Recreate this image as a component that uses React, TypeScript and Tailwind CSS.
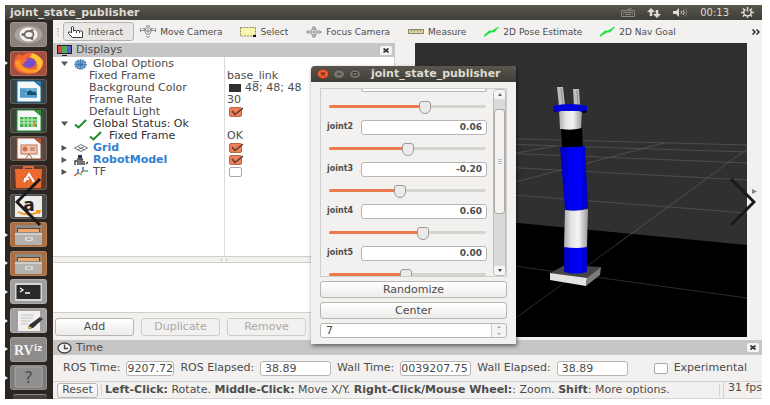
import React, { useState } from "react";

function TopBar() {
  return (
    <header className="flex h-[15px] items-center justify-between bg-gradient-to-b from-[#59564d] to-[#3f3e39] pl-[5px] pr-2 text-[#dfdbd2]">
      <h1 className="text-[11px] leading-3 font-bold">joint_state_publisher</h1>
      <div className="flex items-center gap-3">
        <svg width="14" height="9" viewBox="0 0 14 9" fill="none" stroke="#8b887f" aria-label="Keyboard">
          <path d="M0.500 2.500h13v6h-13zM7 2.500V1h3V0M2 4.500h10M2 6.500h1M4 6.500h6M11 6.500h1" />
        </svg>
        <svg width="14" height="10" viewBox="0 0 14 10" fill="#dfdbd2" aria-label="Network">
          <path d="M4 0L0 4h2.700v4h2.600V4H8zM10 10l4-4h-2.700V2H8.700v4H6z" />
        </svg>
        <svg width="15" height="9" viewBox="0 0 15 9" aria-label="Sound">
          <path fill="#dfdbd2" d="M0 3h3l3-3v9L3 6H0z" />
          <path fill="none" stroke="#dfdbd2" d="M8 3q1.500 1.500 0 3M10 2q2.500 2.500 0 5" />
          <path fill="none" stroke="#8b887f" d="M12 0.500q3.500 4 0 8" />
        </svg>
        <time className="text-[10px] leading-3">00:13</time>
        <svg width="13" height="11" viewBox="0 0 13 11" fill="none" stroke="#dfdbd2" aria-label="Session">
          <path strokeWidth="1.500" d="M4.500 2.700a3.800 3.300 0 1 0 4 0M6.500 0v4.500M0 5.500h2.500M10.500 5.500H13M2 1.500l1.500 1.500M11 1.500L9.500 3M2 9.500L3.500 8M11 9.500L9.500 8M6.500 9v2" />
        </svg>
      </div>
    </header>
  );
}

function Drawer() {
  return (
    <g>
      <rect x="5" y="3" width="27" height="19" rx="1" fill="#8d8a86" />
      <rect x="7" y="6" width="23" height="4" fill="#5c4636" />
      <rect x="8" y="7" width="21" height="3" fill="#f0a868" />
      <rect x="5" y="11" width="27" height="12" rx="1" fill="#b4b2af" />
      <rect x="5" y="11" width="27" height="2" fill="#cfcdca" />
      <rect x="15" y="15" width="8" height="4" rx="1" fill="#dddbd8" />
      <path d="M17 17h4" stroke="#888" />
    </g>
  );
}

function DocIcon({ color, dark }: { color: string; dark: string }) {
  return (
    <g>
      <path d="M7 2h17l7 6v15H7z" fill="#f4f6f7" stroke={dark} />
      <path d="M24 2h7v6z" fill={color} />
    </g>
  );
}

const launcher: { name: string; tile: string; running?: boolean; art: React.ReactNode }[] = [
  {
    name: "Search your computer",
    tile: "bg-[#8b837c]",
    art: (
      <g>
        <ellipse cx="18.500" cy="12.500" rx="14" ry="9" fill="#aaa39d" />
        <ellipse cx="18.500" cy="12.500" rx="9" ry="7" fill="#f4f2f0" />
        <ellipse cx="19" cy="12.500" rx="4.500" ry="3.500" fill="none" stroke="#716a64" strokeWidth="1.800" />
        <circle cx="13" cy="12.500" r="1.600" fill="#716a64" />
        <circle cx="22" cy="8.500" r="1.500" fill="#716a64" />
        <circle cx="22" cy="16.500" r="1.500" fill="#716a64" />
      </g>
    ),
  },
  {
    name: "Firefox",
    tile: "bg-[#a4503f]",
    running: true,
    art: (
      <g>
        <path d="M5 7q2-1 3-4 3 2 6 1 3-3 8-2 8 2 11 9 0 10-12 12-14 1-17-8z" fill="#f5642f" />
        <path d="M22 2q9 3 11 9-1 9-10 11 6-5 4-10-1-4-7-6z" fill="#ffc63d" />
        <path d="M5 10q1 11 14 12 7 0 10-5-9 4-16-1-4-3-2-8z" fill="#ff9a29" />
        <ellipse cx="19" cy="12" rx="6.500" ry="5" fill="#7650c8" />
        <path d="M9 8q5-2 9 1-4 1-4 4-5-1-5-5z" fill="#f5702f" />
      </g>
    ),
  },
  {
    name: "LibreOffice Writer",
    tile: "bg-[#3d4448]",
    art: (
      <g>
        <DocIcon color="#2280b4" dark="#176991" />
        <rect x="10" y="9" width="17" height="10" fill="#6db3d8" />
        <path d="M10 11h6M10 13h7M10 15h5M10 17h17" stroke="#3288b8" />
        <path d="M17 16v-3l3-2 3 2 2-1 2 4z" fill="#17506d" />
      </g>
    ),
  },
  {
    name: "LibreOffice Calc",
    tile: "bg-[#3d463b]",
    art: (
      <g>
        <DocIcon color="#2a9c36" dark="#258c32" />
        <rect x="10" y="9" width="17" height="10" fill="#43b649" />
        <path d="M10 12h17M10 15h17M14 9v10M18 9v10M22 9v10" stroke="#d6f2d6" />
        <path d="M23 19v-5h2v5z" fill="#f09030" />
      </g>
    ),
  },
  {
    name: "LibreOffice Impress",
    tile: "bg-[#574842]",
    art: (
      <g>
        <DocIcon color="#b75434" dark="#94492f" />
        <rect x="11" y="9" width="16" height="9" fill="#f1c8b6" stroke="#c4714f" />
        <circle cx="15" cy="13" r="2.500" fill="#cc6f4b" />
        <path d="M20 12h5M20 14h5M19 18l-3 4M19 18l3 4" stroke="#a3624a" />
      </g>
    ),
  },
  {
    name: "Ubuntu Software",
    tile: "bg-[#5c3a2c]",
    art: (
      <g>
        <path d="M14 5V2h9v3" fill="none" stroke="#e0653a" strokeWidth="2" />
        <path d="M5 4h27l-1 19H6z" fill="#e9692f" />
        <path d="M14 17l5-8 5 8M14 14h5" fill="none" stroke="#fff" strokeWidth="2" />
      </g>
    ),
  },
  {
    name: "Amazon",
    tile: "bg-[#4b4a49]",
    art: (
      <g>
        <rect x="5" y="2" width="27" height="21" fill="#eeeceb" />
        <text x="19" y="17" textAnchor="middle" fontSize="17" fontWeight="bold" fill="#222">a</text>
        <path d="M8 18q10 5 21 0M26 17h4l-1 3" fill="none" stroke="#f5981e" strokeWidth="1.800" />
      </g>
    ),
  },
  { name: "Files", tile: "bg-[#a96f43]", running: true, art: <Drawer /> },
  { name: "Files", tile: "bg-[#a96f43]", running: true, art: <Drawer /> },
  {
    name: "Terminal",
    tile: "bg-[#a09e9c]",
    running: true,
    art: (
      <g>
        <rect x="5" y="4" width="27" height="18" rx="1" fill="#d8d6d4" />
        <rect x="6.500" y="6" width="24" height="14" fill="#2b2b2b" />
        <path d="M10 9l3 2-3 2M15 14h5" fill="none" stroke="#fff" strokeWidth="1.300" />
      </g>
    ),
  },
  {
    name: "Text Editor",
    tile: "bg-[#a3a1a0]",
    running: true,
    art: (
      <g>
        <rect x="8" y="3" width="22" height="20" fill="#f1f0ef" />
        <path d="M11 7h13M11 10h12M11 13h9M11 16h7" stroke="#c4c2c0" />
        <path d="M30 9l3 2-10 9-5 1 1-4z" fill="#333" />
        <path d="M30 9l2-1 2 2-1 1z" fill="#c883a5" />
        <path d="M18 21l1-3 3 2z" fill="#e8b84a" />
      </g>
    ),
  },
  {
    name: "RViz",
    tile: "bg-[#8e8c8b]",
    running: true,
    art: (
      <g fill="#f3f3f3" fontWeight="bold">
        <text x="4" y="18" fontSize="14" className="font-['Liberation_Serif',serif]">RV</text>
        <text x="24" y="14" fontSize="9">iz</text>
      </g>
    ),
  },
  {
    name: "Unknown application",
    tile: "bg-[#7d7c7b]",
    running: true,
    art: (
      <g>
        <rect x="5" y="2" width="27" height="20" rx="1" fill="#8f8e8d" stroke="#a9a8a7" />
        <text x="18.500" y="18" textAnchor="middle" fontSize="16" fill="#4b4b4b">?</text>
      </g>
    ),
  },
];

function Launcher() {
  return (
    <nav aria-label="Launcher" className="flex w-12 shrink-0 flex-col justify-between bg-[#2b2622] pt-0.5">
      {launcher.map((item, i) => (
        <div key={i} className="flex items-center">
          <svg className="w-[5px]" width="5" height="4" viewBox="0 0 5 4">
            {item.running && <path d="M0 0l3 2-3 2z" fill="#f0f0f0" />}
          </svg>
          <button aria-label={item.name} className={"h-[25px] w-[37px] rounded-[3px] border border-white/15 " + item.tile}>
            <svg className="-m-px block" width="37" height="25" viewBox="0 0 37 25">{item.art}</svg>
          </button>
        </div>
      ))}
      <div className="ml-2 h-[5px] w-[34px] rounded-t-[3px] border-t border-[#8a8988] bg-[#454341]" />
    </nav>
  );
}

const greenArrow = (
  <svg width="15" height="10" viewBox="0 0 15 10">
    <path d="M0 8.500L5 4h3l6.500-4L10 5H7L0 9.500z" fill="#17e33f" stroke="#17e33f" strokeWidth=".8" />
  </svg>
);

const tools = [
  {
    label: "Move Camera",
    icon: (
      <svg width="16" height="13" viewBox="0 0 16 13" fill="none" stroke="#8a8987">
        <ellipse cx="8" cy="6" rx="3" ry="3.500" />
        <path d="M0.500 3v4M15.500 3v4M1 5.500h4M11 5.500h4M2.500 3.500h2v2M13.500 3.500h-2v2M6 1.500l2-1 2 1M6 11l2 1.500L10 11M6 6h4M8 4v4" />
      </svg>
    ),
  },
  {
    label: "Select",
    icon: (
      <svg width="16" height="10" viewBox="0 0 16 10">
        <rect x="0.500" y="0.500" width="15" height="8.500" fill="#fbf5ac" stroke="#8c8860" strokeDasharray="2 1" />
        <path d="M13 8h3v2h-3z" fill="#111" />
      </svg>
    ),
  },
  {
    label: "Focus Camera",
    icon: (
      <svg width="16" height="12" viewBox="0 0 16 12" fill="none" stroke="#949290">
        <ellipse cx="8" cy="6" rx="3.500" ry="3" />
        <path d="M6 2l2-1.500L10 2zM6 10l2 1.500 2-1.500zM3 4.500L0.500 6 3 7.500zM13 4.500L15.500 6 13 7.500zM5 6h6M8 3.500v5" />
      </svg>
    ),
  },
  {
    label: "Measure",
    icon: (
      <svg width="16" height="5" viewBox="0 0 16 5">
        <rect x="0.500" y="0.500" width="15" height="4" fill="#dcd4a4" stroke="#8d8868" />
        <path d="M3.500 1v1.500M6.500 1v1.500M9.500 1v1.500M12.500 1v1.500" stroke="#8d8868" />
      </svg>
    ),
  },
  { label: "2D Pose Estimate", icon: greenArrow },
  { label: "2D Nav Goal", icon: greenArrow },
];

function Toolbar() {
  return (
    <div role="toolbar" className="flex h-[23px] items-center pl-1 pr-0.5 text-[9px] leading-3 whitespace-nowrap text-[#4c4c4c]">
      <span className="mr-1 h-2 w-0.5 border-x border-dotted border-[#c8c6c4]" />
      <button className="mr-1.5 flex h-[19px] items-center gap-1 rounded-[3px] border border-[#b5b2af] bg-[#e8e7e5] pr-2.5 pl-1">
        <svg width="16" height="12" viewBox="0 0 16 12" fill="#fff" stroke="#3c3c3c">
          <path d="M4.500 11.500L0.500 7.500V6h2l1 1V1q1-1 2 0v4q1.500-1.500 3 0 1.500-1.500 3 0 1.500-.5 3 .5v6zM8.500 5v2M11.500 5v2" />
        </svg>
        Interact
      </button>
      <div className="flex flex-1 items-center gap-[18px]">
        {tools.map((t) => (
          <button key={t.label} className="flex items-center gap-1">
            {t.icon}
            {t.label}
          </button>
        ))}
      </div>
      <button aria-label="More tools">
        <svg width="8" height="6" viewBox="0 0 8 6" fill="none" stroke="#222" strokeWidth="1.400">
          <path d="M0.500 0.500L3 3 0.500 5.500M4.500 0.500L7 3 4.500 5.500" />
        </svg>
      </button>
    </div>
  );
}

function CloseButton({ label }: { label: string }) {
  return (
    <button aria-label={label} className="flex h-[9px] w-3 items-center justify-center rounded-[2px] bg-[#f6f5f4]">
      <svg width="6" height="5" viewBox="0 0 6 5" stroke="#333" strokeWidth="1.700">
        <path d="M0.500 0.500l5 4M5.500 0.500l-5 4" />
      </svg>
    </button>
  );
}

function Check({ label, initial }: { label: string; initial: boolean }) {
  const [on, setOn] = useState(initial);
  return (
    <span className="relative flex h-3 w-[15px] items-center">
      <input
        type="checkbox"
        aria-label={label}
        checked={on}
        onChange={() => setOn(!on)}
        className="ml-0.5 h-2.5 w-[13px] appearance-none rounded-[2px] border border-[#aaa7a4] bg-white checked:border-[#b9674a] checked:bg-[#ee7f58]"
      />
      {on && (
        <svg className="pointer-events-none absolute top-0 left-0.5" width="15" height="11" viewBox="0 0 15 11">
          <path d="M3 5l3 3.500L14 2" fill="none" stroke="#5b3a2c" strokeWidth="1.500" />
        </svg>
      )}
    </span>
  );
}

const tick = (
  <svg width="13" height="10" viewBox="0 0 13 10">
    <path d="M1 5.500l3.500 3L12 1" fill="none" stroke="#218a2b" strokeWidth="2" />
  </svg>
);

const gear = (
  <svg width="13" height="11" viewBox="0 0 13 11">
    <ellipse cx="6.500" cy="5.500" rx="5.500" ry="4.500" fill="#6fa3d8" stroke="#4a7fb8" strokeWidth="1.600" strokeDasharray="1.500 1" />
    <path d="M6.500 1.500v8M2 5.500h9M3.500 3l6 5M9.500 3l-6 5" stroke="#3c6ea6" strokeWidth=".8" />
  </svg>
);

const gridIcon = (
  <svg width="14" height="8" viewBox="0 0 14 8" fill="none" stroke="#777">
    <path d="M0.500 4L7 0.500 13.500 4 7 7.500zM3.500 2.500l7 3.500M10.500 2.500l-7 3.500" />
  </svg>
);

const robotIcon = (
  <svg width="14" height="11" viewBox="0 0 14 11">
    <path d="M4 0h4v3H4z" fill="#2c3550" />
    <path d="M1 10V6h3v4M6 10V4h2v6M10 10V6M12 9l2-2M3 4h6" fill="none" stroke="#3a3a3a" strokeWidth="1.400" />
  </svg>
);

const tfIcon = (
  <svg width="14" height="10" viewBox="0 0 14 10" fill="none" strokeWidth="1.300">
    <path d="M0 9l4-3M7 6l2-2" stroke="#e23b3b" />
    <path d="M4 6V2M9 4V0" stroke="#3548dd" />
    <path d="M4 6l4 2M9 4h5" stroke="#3bc84b" />
  </svg>
);

const rows: {
  name: string;
  depth: number;
  open?: boolean;
  icon?: React.ReactNode;
  tone?: string;
  value?: React.ReactNode;
}[] = [
  { name: "Global Options", depth: 0, open: true, icon: gear },
  { name: "Fixed Frame", depth: 1, value: "base_link" },
  {
    name: "Background Color",
    depth: 1,
    value: (
      <>
        <span className="mr-1 ml-0.5 h-2 w-3 bg-[#303030]" />
        48; 48; 48
      </>
    ),
  },
  { name: "Frame Rate", depth: 1, value: "30" },
  { name: "Default Light", depth: 1, value: <Check label="Default Light" initial /> },
  { name: "Global Status: Ok", depth: 0, open: true, icon: tick, tone: "text-[#2f2f2f]" },
  { name: "Fixed Frame", depth: 1, icon: tick, tone: "text-[#2f2f2f]", value: "OK" },
  { name: "Grid", depth: 0, open: false, icon: gridIcon, tone: "font-bold text-[#2f80cf]", value: <Check label="Grid" initial /> },
  { name: "RobotModel", depth: 0, open: false, icon: robotIcon, tone: "font-bold text-[#2f80cf]", value: <Check label="RobotModel" initial /> },
  { name: "TF", depth: 0, open: false, icon: tfIcon, value: <Check label="TF" initial={false} /> },
];

function DisplaysPanel() {
  return (
    <section className="flex w-[342px] shrink-0 flex-col">
      <div className="flex h-3.5 items-center justify-between bg-[#c6c6c6] pr-[3px] pl-1">
        <h2 className="flex items-center gap-1 text-[11px] leading-3 text-[#4c4c4c]">
          <svg width="15" height="11" viewBox="0 0 15 11">
            <rect width="15" height="9" fill="#222" />
            <path d="M1 1h4v7H1z" fill="#d84a4a" />
            <path d="M5 1h5v7H5z" fill="#4cae5b" />
            <path d="M10 1h4v7h-4z" fill="#5560c8" />
            <path d="M5 10h5v1H5z" fill="#222" />
          </svg>
          Displays
        </h2>
        <CloseButton label="Close Displays" />
      </div>
      <div className="flex h-[200px] border-r border-b border-[#d0cecb] bg-white text-[11px] leading-3 text-[#4c4c4c]">
        <div className="w-[172px] border-r border-[#dddbd9] pt-px pl-2">
          {rows.map((r, i) => (
            <div key={i} className={"flex h-3 items-center whitespace-nowrap " + (r.tone ?? "")}>
              {r.depth === 0 ? (
                <svg className="mr-1.5" width="7" height="6" viewBox="0 0 7 6" fill="#555">
                  <path d={r.open ? "M0 0.500h7L3.500 5z" : "M0.500 0L6 3 0.500 6z"} />
                </svg>
              ) : (
                <span className="w-7" />
              )}
              {r.icon && <span className={"flex shrink-0 items-center " + (r.depth ? "w-5" : "w-[19px]")}>{r.icon}</span>}
              <span>{r.name}</span>
            </div>
          ))}
        </div>
        <div className="flex-1 pt-px pl-0.5">
          {rows.map((r, i) => (
            <div key={i} className="flex h-3 items-center whitespace-nowrap">{r.value}</div>
          ))}
        </div>
      </div>
      <div className="flex h-[5px] items-center justify-center">
        <span className="h-[3px] w-1.5 border-x border-[#c4c2c0]" />
      </div>
      <div className="h-[51px] border border-l-0 border-[#d0cecb] bg-white" />
      <div className="flex flex-1 items-center gap-[7px] overflow-hidden px-0.5 text-[11px] leading-3">
        <button className="h-[18px] w-[79px] shrink-0 rounded-[3px] border border-[#b8b5b2] bg-gradient-to-b from-white to-[#ececeb] text-[#4c4c4c]">Add</button>
        <button disabled className="h-[18px] w-[79px] shrink-0 rounded-[3px] border border-[#cfcdcb] text-[#aaa8a6]">Duplicate</button>
        <button disabled className="h-[18px] w-[79px] shrink-0 rounded-[3px] border border-[#cfcdcb] text-[#aaa8a6]">Remove</button>
      </div>
    </section>
  );
}

function RobotView() {
  return (
    <svg className="block h-full w-full" viewBox="415 43 332 294" preserveAspectRatio="none" aria-label="3D view">
      <defs>
        <linearGradient id="blue">
          <stop offset="0" stopColor="#0000b4" />
          <stop offset=".35" stopColor="#0000f0" />
          <stop offset=".7" stopColor="#0000ff" />
          <stop offset="1" stopColor="#0000b0" />
        </linearGradient>
        <linearGradient id="white">
          <stop offset="0" stopColor="#aaa" />
          <stop offset=".3" stopColor="#e4e4e4" />
          <stop offset=".6" stopColor="#f4f4f4" />
          <stop offset="1" stopColor="#999" />
        </linearGradient>
      </defs>
      <rect x="415" y="43" width="332" height="294" fill="#303030" />
      <path d="M415 213L747 245V337H415z" fill="#000" />
      <g fill="none" stroke="#565656" strokeWidth=".8">
        <path d="M500 138.500L747 145M500 144L747 152M500 153L747 163M500 167L747 180M500 194L747 213M500 156L555 146M500 186L664 143" />
        <path d="M616 245L747 149" />
      </g>
      <path d="M500 264L747 298M516 318L628 236" fill="none" stroke="#2c2c2c" />
      <path d="M557 87h6l2 19h-6zM573 89h6l1 17h-6z" fill="#bdbdbd" />
      <path d="M561 88l2 17M577 90l1 15" stroke="#8f8f8f" />
      <path d="M559 110h23l-1 19q-10 2-21 0z" fill="url(#white)" />
      <path d="M553 106q17-4 34 0v6q-5 1-8-1h-18q-4 2-7 0z" fill="#0000d8" />
      <path d="M583 110l4 1-1 2h-4zM553 110l3 1-1 2z" fill="#05051c" />
      <path d="M561 129q10 2 21-1l1 19h-21z" fill="#000" />
      <path d="M560 147q12 1 25-1l3 62q-11 4-23 2z" fill="url(#blue)" />
      <path d="M550 273l15-8 36 2-14 12z" fill="#454545" />
      <path d="M564 247h23v25q-11 3-23 0z" fill="url(#blue)" />
      <path d="M565 210q11 2 23-1l-1 38q-11 2-23 0z" fill="url(#white)" />
      <path d="M550 273l37 5-1 8-36-6z" fill="#e2e2e2" />
      <path d="M587 278l14-11-1 8-14 11z" fill="#7c7c7c" />
    </svg>
  );
}

function Field({ label, value, width }: { label: string; value: string; width: string }) {
  return (
    <label className="flex items-center gap-1.5">
      {label}
      <input
        readOnly
        defaultValue={value}
        className={"h-[15px] rounded-[3px] border border-[#b8b5b2] bg-white text-[11px] leading-3 " + width}
      />
    </label>
  );
}

function TimePanel() {
  return (
    <section>
      <div className="flex h-[15px] items-center justify-between bg-[#c6c6c6] pr-[3px] pl-1">
        <h2 className="flex items-center gap-1 text-[11px] leading-3 text-[#4c4c4c]">
          <svg width="15" height="12" viewBox="0 0 15 12" fill="#f4f4f4" stroke="#444" strokeWidth="1.400">
            <ellipse cx="7.500" cy="6" rx="6.500" ry="5" />
            <path d="M7.500 2.500V6.500H11" fill="none" />
          </svg>
          Time
        </h2>
        <CloseButton label="Close Time" />
      </div>
      <div className="flex h-[26px] items-center gap-1.5 pl-2.5 pr-[15px] text-[11px] leading-3 whitespace-nowrap text-[#4c4c4c]">
        <Field label="ROS Time:" value="9207.72" width="w-12" />
        <Field label="ROS Elapsed:" value="38.89" width="w-[71px] pl-1" />
        <Field label="Wall Time:" value="0039207.75" width="w-[71px]" />
        <Field label="Wall Elapsed:" value="38.89" width="w-[71px] pl-1" />
        <label className="ml-auto flex items-center gap-1.5">
          <input type="checkbox" className="h-[11px] w-3.5 appearance-none rounded-[2px] border border-[#aaa7a4] bg-white" />
          Experimental
        </label>
      </div>
    </section>
  );
}

function StatusBar() {
  return (
    <footer className="flex h-[18px] items-center border-t border-b border-[#d5d3d1] pl-1 text-[11px] leading-3 whitespace-nowrap text-[#4c4c4c]">
      <button className="mr-[3px] h-[15px] w-[41px] shrink-0 rounded-[3px] border border-[#b8b5b2] bg-gradient-to-b from-white to-[#ececeb]">Reset</button>
      <p className="flex-1 border-x border-[#d5d3d1] pl-[3px]">
        <b>Left-Click:</b> Rotate. <b>Middle-Click:</b> Move X/Y. <b>Right-Click/Mouse Wheel:</b>: Zoom. <b>Shift</b>: More options.
      </p>
      <span className="ml-[3px] border-l border-[#d5d3d1] pb-1 pl-1">31 fps</span>
    </footer>
  );
}

const thumb =
  "[&::-webkit-slider-thumb]:-mt-1 [&::-webkit-slider-thumb]:h-[13px] [&::-webkit-slider-thumb]:w-3 [&::-webkit-slider-thumb]:appearance-none [&::-webkit-slider-thumb]:rounded-t-[3px] [&::-webkit-slider-thumb]:rounded-b-[6px] [&::-webkit-slider-thumb]:border [&::-webkit-slider-thumb]:border-[#9d9a97] [&::-webkit-slider-thumb]:bg-[#ecebea]";
const track =
  "[&::-webkit-slider-runnable-track]:h-[3px] [&::-webkit-slider-runnable-track]:rounded-full [&::-webkit-slider-runnable-track]:bg-[linear-gradient(90deg,#ec7a50_var(--fill),#d6d4d1_var(--fill))]";

function JointSlider({ name, start }: { name: string; start: number }) {
  const [v, setV] = useState(start);
  return (
    <input
      type="range"
      aria-label={name + " position"}
      value={v}
      onChange={(e) => setV(Number(e.target.value))}
      style={{ "--fill": v + "%" } as React.CSSProperties}
      className={"ml-0.5 block h-7 w-[157px] appearance-none bg-transparent " + track + " " + thumb}
    />
  );
}

const joints = [
  { name: "joint2", value: "0.06", pos: 50 },
  { name: "joint3", value: "-0.20", pos: 45 },
  { name: "joint4", value: "0.60", pos: 61 },
  { name: "joint5", value: "0.00", pos: 49 },
];

function JointDialog() {
  return (
    <div
      role="dialog"
      aria-label="joint_state_publisher"
      className="absolute top-[61px] left-[306px] w-[205px] rounded-t-[4px] bg-[#f2f1f0] shadow-[1px_2px_4px_rgba(0,0,0,0.5)]"
    >
      <div className="flex h-4 items-center gap-1 rounded-t-[4px] bg-gradient-to-b from-[#59564d] to-[#3f3e39] pl-1.5 text-[#dfdbd2]">
        <button aria-label="Close">
          <svg width="12" height="10" viewBox="0 0 12 10">
            <ellipse cx="6" cy="5" rx="5.500" ry="4.500" fill="#ee5f35" stroke="#9c3518" />
            <path d="M4 3.500l4 3M8 3.500l-4 3" stroke="#5d2413" strokeWidth="1.200" />
          </svg>
        </button>
        <button aria-label="Minimize">
          <svg width="12" height="10" viewBox="0 0 12 10">
            <ellipse cx="6" cy="5" rx="5.500" ry="4.500" fill="#75736b" stroke="#44423c" />
            <path d="M4 5h4" stroke="#3a3934" strokeWidth="1.200" />
          </svg>
        </button>
        <button aria-label="Maximize">
          <svg width="12" height="10" viewBox="0 0 12 10">
            <ellipse cx="6" cy="5" rx="5.500" ry="4.500" fill="#75736b" stroke="#44423c" />
            <path d="M4 3.500h4v3H4z" fill="none" stroke="#3a3934" />
          </svg>
        </button>
        <h2 className="ml-1.5 text-[11px] leading-3 font-bold">joint_state_publisher</h2>
      </div>
      <div className="flex flex-col gap-1 px-[9px] pt-1.5 pb-1.5 text-[11px] leading-3 text-[#4c4c4c]">
        <div className="flex h-[189px] border border-[#cfcdcb]">
          <div className="flex-1 overflow-hidden pl-1.5">
            <div className="ml-[34px] h-[3px] w-[126px] rounded-b-[3px] border border-t-0 border-[#b8b5b2] bg-white" />
            <JointSlider name="joint1" start={62} />
            {joints.map((j) => (
              <div key={j.name}>
                <label className="flex h-3.5 items-center text-[8px] leading-3 font-bold">
                  <span className="w-[34px]">{j.name}</span>
                  <input
                    readOnly
                    defaultValue={j.value}
                    className="h-[15px] w-[126px] rounded-[3px] border border-[#b8b5b2] bg-white pr-1 text-right text-[9px]"
                  />
                </label>
                <JointSlider name={j.name} start={j.pos} />
              </div>
            ))}
          </div>
          <div className="flex w-[13px] flex-col rounded-[4px] border border-[#bdbab7] bg-[#dcdad8]">
            <button aria-label="Scroll up" className="flex h-[9px] items-center justify-center rounded-t-[3px] bg-[#f6f5f4]">
              <svg width="4" height="3" viewBox="0 0 4 3" fill="#666"><path d="M0 3l2-3 2 3z" /></svg>
            </button>
            <div className="mt-2.5 flex h-[105px] flex-col items-center justify-center gap-px rounded-[3px] border border-[#aaa7a4] bg-[#f4f3f2]">
              <span className="h-px w-1 bg-[#bbb]" />
              <span className="h-px w-1 bg-[#bbb]" />
              <span className="h-px w-1 bg-[#bbb]" />
            </div>
            <button aria-label="Scroll down" className="mt-auto flex h-[9px] items-center justify-center rounded-b-[3px] bg-[#f6f5f4]">
              <svg width="4" height="3" viewBox="0 0 4 3" fill="#444"><path d="M0 0l2 3 2-3z" /></svg>
            </button>
          </div>
        </div>
        <button className="h-[17px] rounded-[3px] border border-[#b8b5b2] bg-gradient-to-b from-white to-[#ececeb]">Randomize</button>
        <button className="h-[17px] rounded-[3px] border border-[#b8b5b2] bg-gradient-to-b from-white to-[#ececeb]">Center</button>
        <div className="flex h-[15px] overflow-hidden rounded-[3px] border border-[#b8b5b2] bg-white">
          <input aria-label="Count" defaultValue="7" className="min-w-0 flex-1 pl-[5px]" />
          <div className="flex w-[15px] flex-col items-center justify-center gap-1 border-l border-[#cfcdcb] bg-[#f4f3f2]">
            <svg width="4" height="9" viewBox="0 0 4 9" fill="#aaa"><path d="M0 2l2-2 2 2zM0 7l2 2 2-2z" /></svg>
          </div>
        </div>
      </div>
    </div>
  );
}

export default function App() {
  return (
    <main className="flex min-h-screen flex-col bg-white pt-[5px] pr-2 pb-1.5 pl-[5px] font-['DejaVu_Sans',sans-serif]">
      <div className="relative flex flex-1 flex-col bg-[#f2f1f0]">
        <TopBar />
        <div className="flex flex-1">
          <Launcher />
          <div className="flex min-w-0 flex-1 flex-col">
            <Toolbar />
            <div className="flex flex-1">
              <DisplaysPanel />
              <div className="ml-5 min-w-0 flex-1 pb-[3px]">
                <RobotView />
              </div>
              <button aria-label="Show side panel" className="flex w-[15px] items-center justify-center">
                <svg width="5" height="5" viewBox="0 0 5 5" fill="#858381"><path d="M0 0l5 2.500L0 5z" /></svg>
              </button>
            </div>
            <TimePanel />
            <StatusBar />
          </div>
        </div>
        <JointDialog />
        <button aria-label="Previous image" className="absolute top-[172px] left-2.5">
          <svg width="28" height="50" viewBox="0 0 28 50" fill="none" stroke="#1a1a1a" strokeWidth="3">
            <path d="M25 2L2 25 25 48" />
          </svg>
        </button>
        <button aria-label="Next image" className="absolute top-[172px] right-1.5">
          <svg width="28" height="50" viewBox="0 0 28 50" fill="none" stroke="#1a1a1a" strokeWidth="3">
            <path d="M3 2L26 25 3 48" />
          </svg>
        </button>
      </div>
    </main>
  );
}
